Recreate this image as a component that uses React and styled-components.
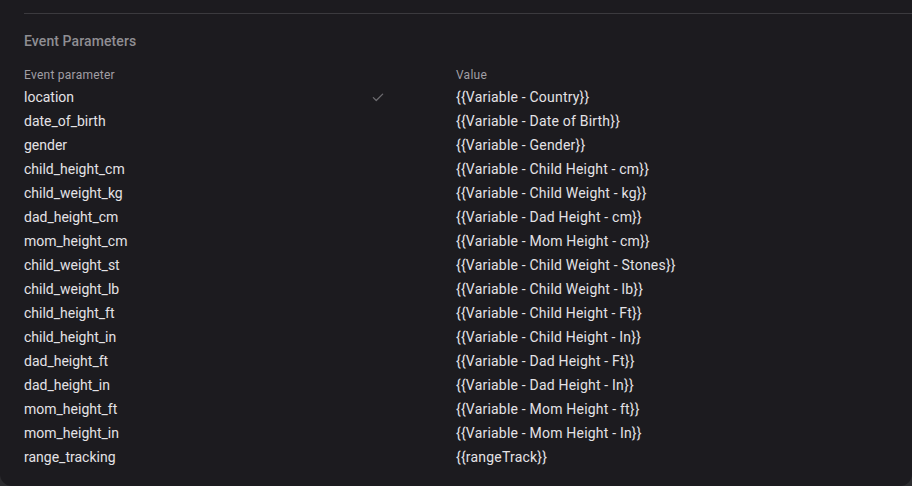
import React from "react";
import styled, { createGlobalStyle } from "styled-components";

const Global = createGlobalStyle`
  html, body {
    margin: 0;
    padding: 0;
    background: #2c2c2f;
  }
  body {
    font-family: Roboto, "Noto Sans", sans-serif;
  }
`;

const Card = styled.div`
  width: 912px;
  height: 486px;
  box-sizing: border-box;
  background: #1c1b1f;
  border-radius: 0 0 12px 12px;
  padding: 13px 0 0 24px;
  overflow: hidden;
`;

const Divider = styled.div`
  height: 1px;
  background: #3b3a3e;
`;

const Title = styled.h3`
  margin: 17px 0 0;
  font-size: 14px;
  line-height: 20px;
  font-weight: 500;
  letter-spacing: 0.1px;
  color: #8f8e93;
`;

const Table = styled.div`
  margin-top: 16px;
  display: grid;
  grid-template-columns: 342px 24px 1fr;
`;

const HeadCell = styled.div`
  font-size: 12px;
  line-height: 16px;
  height: 18px;
  letter-spacing: 0.25px;
  color: #a19fa5;
  padding-left: ${(p) => (p.$value ? "66px" : "0")};
`;

const Cell = styled.div`
  font-size: 14px;
  line-height: 24px;
  height: 24px;
  color: #e4e2e6;
  white-space: nowrap;
  letter-spacing: ${(p) => (p.$value ? "0.2px" : "0")};
  padding-left: ${(p) => (p.$value ? "66px" : "0")};
`;

const IconCell = styled.div`
  height: 24px;
  display: flex;
  align-items: center;
  justify-content: center;
  color: #6d6c70;
`;

const Check = () => (
  <svg width="14" height="14" viewBox="0 0 24 24" fill="none" stroke="currentColor" strokeWidth="2.2" strokeLinecap="round" strokeLinejoin="round">
    <path d="M4 13l5 5L20 7" />
  </svg>
);

const rows = [
  ["location", "{{Variable - Country}}", true],
  ["date_of_birth", "{{Variable - Date of Birth}}"],
  ["gender", "{{Variable - Gender}}"],
  ["child_height_cm", "{{Variable - Child Height - cm}}"],
  ["child_weight_kg", "{{Variable - Child Weight - kg}}"],
  ["dad_height_cm", "{{Variable - Dad Height - cm}}"],
  ["mom_height_cm", "{{Variable - Mom Height - cm}}"],
  ["child_weight_st", "{{Variable - Child Weight - Stones}}"],
  ["child_weight_lb", "{{Variable - Child Weight - lb}}"],
  ["child_height_ft", "{{Variable - Child Height - Ft}}"],
  ["child_height_in", "{{Variable - Child Height - In}}"],
  ["dad_height_ft", "{{Variable - Dad Height - Ft}}"],
  ["dad_height_in", "{{Variable - Dad Height - In}}"],
  ["mom_height_ft", "{{Variable - Mom Height - ft}}"],
  ["mom_height_in", "{{Variable - Mom Height - In}}"],
  ["range_tracking", "{{rangeTrack}}"],
];

export default function App() {
  return (
    <>
      <Global />
      <Card>
        <Divider />
        <Title>Event Parameters</Title>
        <Table>
          <HeadCell>Event parameter</HeadCell>
          <HeadCell />
          <HeadCell $value>Value</HeadCell>
          {rows.map(([name, value, checked]) => (
            <React.Fragment key={name}>
              <Cell>{name}</Cell>
              <IconCell>{checked ? <Check /> : null}</IconCell>
              <Cell $value>{value}</Cell>
            </React.Fragment>
          ))}
        </Table>
      </Card>
    </>
  );
}
